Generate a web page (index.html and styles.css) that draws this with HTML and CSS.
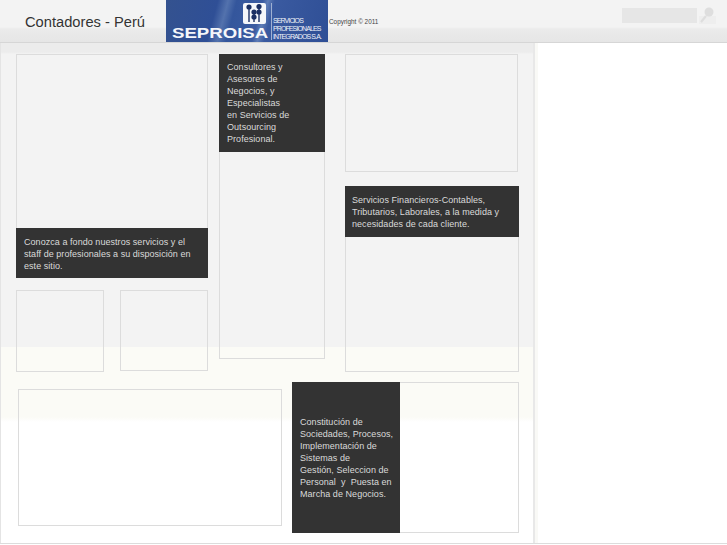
FILE: index.html
```html
<!DOCTYPE html>
<html lang="es">
<head>
  <meta charset="UTF-8">
  <meta name="viewport" content="width=device-width, initial-scale=1.0">
  <title>Contadores - Perú</title>
  <link rel="stylesheet" href="styles.css">
</head>
<body>
  <header class="header">
    <h1 class="title">Contadores - Perú</h1>
    <div class="logo">
      <div class="logo-main">
        <svg class="logo-icon" width="23" height="21" viewBox="0 0 23 21">
          <rect width="23" height="21" rx="2" fill="#f4f6fa"/>
          <path d="M6 3v16M11 8v11M16 3v16" stroke="#1b2f63" stroke-width="1.4" fill="none"/>
          <circle cx="6" cy="4" r="2.6" fill="#1b2f63"/>
          <circle cx="16" cy="3.5" r="2.6" fill="#1b2f63"/>
          <circle cx="11" cy="9" r="2.6" fill="#1b2f63"/>
          <circle cx="16" cy="9" r="2.6" fill="#1b2f63"/>
          <circle cx="11" cy="14" r="2.6" fill="#1b2f63"/>
        </svg>
        <span class="logo-name">SEPROISA</span>
      </div>
      <div class="logo-sub">SERVICIOS<br>PROFESIONALES<br>INTEGRADOS S.A.</div>
    </div>
    <span class="copyright">Copyright © 2011</span>
    <div class="search">
      <div class="search-box"></div>
      <svg class="search-icon" width="18" height="17" viewBox="0 0 18 17">
        <rect x="1" y="9" width="17" height="8" fill="#eeeeee"/>
        <circle cx="11" cy="5" r="4.5" fill="#dedede"/>
        <path d="M8 9l-5 6" stroke="#dedede" stroke-width="2.2"/>
      </svg>
    </div>
  </header>

  <div class="page">
    <main class="content">
      <div class="top">
        <div class="col-left">
          <div class="box box-lead">
            <p class="note note-lead">Conozca a fondo nuestros servicios y el staff de profesionales a su disposición en este sitio.</p>
          </div>
          <div class="small-row">
            <div class="box small small-a"></div>
            <div class="box small small-b"></div>
          </div>
        </div>
        <div class="box col-mid">
          <p class="note note-mid">Consultores y<br>Asesores de<br>Negocios, y<br>Especialistas<br>en Servicios de<br>Outsourcing<br>Profesional.</p>
        </div>
        <div class="col-right">
          <div class="box photo"></div>
          <div class="box panel">
            <p class="note note-panel">Servicios Financieros-Contables, Tributarios, Laborales, a la medida y necesidades de cada cliente.</p>
          </div>
        </div>
      </div>
      <div class="bottom">
        <div class="box wide"></div>
        <div class="box feature">
          <p class="note note-feature">Constitución de<br>Sociedades, Procesos,<br>Implementación de<br>Sistemas de<br>Gestión, Seleccion de<br>Personal&nbsp; y&nbsp; Puesta en<br>Marcha de Negocios.</p>
        </div>
      </div>
    </main>
    <div class="strip"></div>
    <aside class="side"></aside>
  </div>
</body>
</html>
```

FILE: styles.css
```css
html, body {
  margin: 0;
  height: 100%;
}
body {
  font-family: "Liberation Sans", Arial, sans-serif;
  background-color: #fff;
  overflow: hidden;
}
.header {
  display: flex;
  height: 43px;
  box-sizing: border-box;
  border-bottom: 1px solid #d6d6d6;
  background: linear-gradient(#f3f3f3 27px, #ebebeb 29px, #e8e8e8 36px, #e6e6e6 42px);
}
.title {
  margin: 0;
  width: 141px;
  padding: 13px 0 0 25px;
  font-size: 14.7px;
  line-height: 18px;
  font-weight: normal;
  color: #333;
}
.logo {
  display: flex;
  width: 162px;
  height: 42px;
  background: linear-gradient(105deg, #34528f 0, #2f4f96 30%, #5372ad 36%, #34569c 41%, #3a5ba1 56%, #5e7cb6 59%, #3a5aa0 63%, #2f4f96 100%);
}
.logo-main {
  display: flex;
  flex-direction: column;
  width: 105px;
  padding-top: 3px;
  box-sizing: border-box;
}
.logo-icon {
  margin-left: 77px;
}
.logo-name {
  display: block;
  margin: 2px 0 0 6px;
  font-size: 14px;
  line-height: 14px;
  font-weight: bold;
  color: #f4f6fa;
  transform: scaleX(1.33);
  transform-origin: left;
}
.logo-sub {
  height: 37px;
  margin-top: 3px;
  padding: 14px 0 0 1px;
  box-sizing: border-box;
  border-left: 1px solid #9fb0d2;
  font-size: 7px;
  line-height: 8px;
  letter-spacing: -0.9px;
  color: #eef1f7;
  white-space: nowrap;
}
.copyright {
  width: 293px;
  padding: 18px 0 0 1px;
  font-size: 6.4px;
  line-height: 7px;
  color: #444;
}
.search {
  display: flex;
  gap: 1px;
  padding-top: 8px;
}
.search-box {
  width: 75px;
  height: 15px;
  background-color: #e6e6e6;
}
.search-icon {
  margin-top: -1px;
}

.page {
  display: flex;
  height: 501px;
  box-sizing: border-box;
  border-bottom: 1px solid #dcdcdc;
}
.content {
  width: 533px;
  padding: 11px 0 0 1px;
  box-sizing: border-box;
  border-left: 1px solid #e4e4e4;
  background: linear-gradient(#ececec 9px, #f3f3f3 11px, #f3f3f3 304px, #fbfbf6 304px, #fbfbf6 374px, #fff 379px);
}
.strip {
  width: 5px;
  box-sizing: border-box;
  border-left: 2px solid #e8e8e8;
  background-color: #f9f9f6;
}
.side {
  flex: 1;
  background-color: #fff;
}

.box {
  border: 1px solid #dcdcdc;
  box-sizing: border-box;
}
/* dark captions sit over the border of their box */
.note {
  margin: -1px -1px 0;
  background-color: #333;
  color: #dadada;
  font-size: 9px;
  line-height: 12px;
  letter-spacing: 0.05px;
  box-sizing: border-box;
}

.top {
  display: flex;
  height: 328px;
}
.col-left {
  display: flex;
  flex-direction: column;
  gap: 12px;
  width: 192px;
  margin-left: 14px;
}
.box-lead {
  display: flex;
  align-items: flex-end;
  height: 224px;
}
.note-lead {
  flex: 1;
  height: 50px;
  margin: 0 -1px -1px;
  padding: 8px 8px 0;
}
.small-row {
  display: flex;
  justify-content: space-between;
  align-items: flex-start;
}
.small {
  width: 88px;
}
.small-a {
  height: 82px;
}
.small-b {
  height: 81px;
}
.col-mid {
  width: 106px;
  height: 305px;
  margin-left: 11px;
}
.note-mid {
  height: 98px;
  padding: 7px 8px 0;
}
.col-right {
  display: flex;
  flex-direction: column;
  gap: 14px;
  width: 174px;
  margin-left: 20px;
}
.photo {
  width: 173px;
  height: 118px;
}
.panel {
  height: 186px;
}
.note-panel {
  height: 51px;
  padding: 8px 7px 0;
}

.bottom {
  display: flex;
  align-items: flex-start;
}
.wide {
  width: 264px;
  height: 137px;
  margin: 7px 0 0 16px;
}
.feature {
  display: flex;
  width: 227px;
  height: 151px;
  margin-left: 10px;
}
.note-feature {
  width: 108px;
  padding: 34px 0 0 8px;
  margin: -1px 0 -1px -1px;
}
```
